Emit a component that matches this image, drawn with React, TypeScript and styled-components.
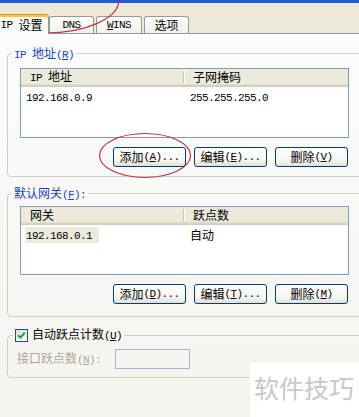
import React from "react";
import styled, { createGlobalStyle } from "styled-components";

const GlobalStyle = createGlobalStyle`
    html, body {
        margin: 0;
        padding: 0;
        background: #ECE9D8;
    }
    body {
        font-family: "Noto Sans CJK SC", "Noto Sans", sans-serif;
        font-size: 12px;
        line-height: 14px;
        color: #000;
    }
`;

const Root = styled.div`
    position: relative;
    width: 359px;
    height: 417px;
    overflow: hidden;
    background: #ECE9D8;
    display: flex;
    flex-direction: column;
`;

const TitleBand = styled.div`
    flex: none;
    height: 3px;
    background: #1D5CD9;
`;

const TabStrip = styled.div`
    flex: none;
    height: 30px;
    display: flex;
    align-items: flex-end;
    gap: 2px;
`;

const Tab = styled.div<{ $w: number; $active?: boolean }>`
    position: relative;
    z-index: ${p => (p.$active ? 1 : 0)};
    box-sizing: border-box;
    width: ${p => p.$w}px;
    height: ${p => (p.$active ? 20 : 17)}px;
    margin-bottom: ${p => (p.$active ? -1 : 0)}px;
    margin-left: ${p => (p.$active ? -6 : 0)}px;
    margin-right: ${p => (p.$active ? -2 : 0)}px;
    border: 1px solid #919B9C;
    border-bottom: none;
    border-top-color: ${p => (p.$active ? "#E68B2C" : "#919B9C")};
    border-radius: 3px 3px 0 0;
    background: ${p => (p.$active ? "#FCFCFE" : "linear-gradient(#FFFFFF, #F1F0EA)")};
    box-shadow: ${p => (p.$active ? "inset 0 2px 0 #FFC83C" : "none")};
    display: flex;
    align-items: center;
    justify-content: center;
    padding-top: ${p => (p.$active ? 1 : 0)}px;
`;

const Page = styled.div`
    flex: 1;
    border-top: 1px solid #919B9C;
    background: linear-gradient(#FCFCFE, #F4F3EE);
    padding: 12px 0 0 7px;
    display: flex;
    flex-direction: column;
`;

const Group = styled.fieldset<{ $pt: number; $pb: number; $pl: number; $mt?: number }>`
    margin: ${p => p.$mt || 0}px -40px 0 0;
    min-width: 0;
    border: 1px solid #D0D0BF;
    border-radius: 4px;
    padding: ${p => p.$pt}px 0 ${p => p.$pb}px ${p => p.$pl}px;
`;

const Legend = styled.legend<{ $ml: number; $plain?: boolean }>`
    margin-left: ${p => p.$ml}px;
    padding: 0 2px;
    height: 14px;
    line-height: 14px;
    color: ${p => (p.$plain ? "#000" : "#1B45B4")};
`;

const LegendInner = styled.span`
    display: inline-flex;
    align-items: center;
    gap: 4px;
    height: 14px;
`;

const ListBox = styled.div<{ $h: number }>`
    box-sizing: border-box;
    width: 329px;
    height: ${p => p.$h}px;
    border: 1px solid #7F9DB9;
    background: #fff;
`;

const HeaderRow = styled.div`
    display: grid;
    grid-template-columns: 163px 1fr;
    height: 18px;
    background: linear-gradient(#EBEADB 0, #EBEADB 15px, #E2DECD 15px, #D6D2C2 17px, #CBC7B8 18px);
`;

const HeadCell = styled.div<{ $sep?: boolean }>`
    display: flex;
    align-items: center;
    padding-left: 9px;
    height: 16px;

    &::after {
        content: "";
        display: ${p => (p.$sep ? "block" : "none")};
        margin-left: auto;
        width: 1px;
        height: 12px;
        background: #C7C5B2;
        box-shadow: 1px 0 0 #fff;
    }
`;

const Row = styled.div`
    display: grid;
    grid-template-columns: 163px 1fr;
    height: 14px;
    margin-top: 2px;
    align-items: center;
`;

const Cell = styled.div<{ $pl: number }>`
    padding-left: ${p => p.$pl}px;
    white-space: nowrap;
`;

const Selected = styled.span`
    display: inline-block;
    padding: 0 7px 0 1px;
    margin-left: -1px;
    background: #EDEBDD;
`;

const ButtonRow = styled.div`
    width: 328px;
    margin-top: 9px;
    display: flex;
    justify-content: flex-end;
    gap: 8px;
`;

const Button = styled.button`
    box-sizing: border-box;
    width: 73px;
    height: 20px;
    padding: 0;
    border: 1px solid #003C74;
    border-radius: 3px;
    background: linear-gradient(#FFFFFF, #F5F4EF 70%, #E2DFD5);
    font: inherit;
    color: #000;
    display: flex;
    align-items: center;
    justify-content: center;
`;

const CheckBox = styled.span`
    box-sizing: border-box;
    width: 13px;
    height: 13px;
    border: 1px solid #1C5180;
    background: linear-gradient(135deg, #DCDCD7, #FFFFFF);
    display: flex;
    align-items: center;
    justify-content: center;
`;

const FieldRow = styled.div`
    display: flex;
    align-items: center;
    height: 20px;
`;

const FieldLabel = styled.span`
    width: 98px;
    color: #ACA899;
    white-space: nowrap;
`;

const FieldInput = styled.div`
    box-sizing: border-box;
    width: 75px;
    height: 20px;
    border: 1px solid #A5B5CA;
`;

const Lat = styled.span`
    font-family: "Liberation Mono", "DejaVu Sans Mono", monospace;
    font-size: 11px;
    letter-spacing: -0.6px;
    white-space: pre;
`;

const Watermark = styled.div`
    position: absolute;
    right: 0;
    bottom: 0;
    width: 109px;
    height: 54px;
    background: #fff;
    box-sizing: border-box;
    padding: 7px 0 0 4px;
    font-size: 25px;
    line-height: 34px;
    color: #C8C8C8;
    white-space: nowrap;
`;

const Mark = styled.svg`
    position: absolute;
    pointer-events: none;
    overflow: visible;
`;

// "&X" underlines X, ascii runs get the narrow half-width font
const Txt = ({ s }: { s: string }) => {
    const parts = s.split(/([\x20-\x7e]+)/).filter(Boolean);
    return (
        <>
            {parts.map((p, i) => {
                if (!/^[\x20-\x7e]+$/.test(p)) return <span key={i}>{p}</span>;
                const bits = p.split(/&(.)/);
                return (
                    <Lat key={i}>
                        {bits.map((b, j) => (j % 2 === 1 ? <u key={j}>{b}</u> : b))}
                    </Lat>
                );
            })}
        </>
    );
};

const tabs = [
    { label: "IP 设置", w: 55, active: true },
    { label: "DNS", w: 45 },
    { label: "&WINS", w: 46 },
    { label: "选项", w: 45 },
];

const App = () => {
    return (
        <Root>
            <GlobalStyle />
            <TitleBand />
            <TabStrip>
                {tabs.map(t => (
                    <Tab key={t.label} $w={t.w} $active={t.active}>
                        <Txt s={t.label} />
                    </Tab>
                ))}
            </TabStrip>
            <Page>
                <Group $pt={8} $pb={9} $pl={12}>
                    <Legend $ml={-8}>
                        <LegendInner><span><Txt s="IP 地址(&R)" /></span></LegendInner>
                    </Legend>
                    <ListBox $h={70}>
                        <HeaderRow>
                            <HeadCell $sep><span><Txt s="IP 地址" /></span></HeadCell>
                            <HeadCell>子网掩码</HeadCell>
                        </HeaderRow>
                        <Row>
                            <Cell $pl={5}><Txt s="192.168.0.9" /></Cell>
                            <Cell $pl={6}><Txt s="255.255.255.0" /></Cell>
                        </Row>
                    </ListBox>
                    <ButtonRow>
                        <Button><Txt s="添加(&A)..." /></Button>
                        <Button><Txt s="编辑(&E)..." /></Button>
                        <Button><Txt s="删除(&V)" /></Button>
                    </ButtonRow>
                </Group>

                <Group $pt={6} $pb={12} $pl={12} $mt={9}>
                    <Legend $ml={-8}>
                        <LegendInner><span><Txt s="默认网关(&F):" /></span></LegendInner>
                    </Legend>
                    <ListBox $h={69}>
                        <HeaderRow>
                            <HeadCell $sep>网关</HeadCell>
                            <HeadCell>跃点数</HeadCell>
                        </HeaderRow>
                        <Row>
                            <Cell $pl={5}><Selected><Txt s="192.168.0.1" /></Selected></Cell>
                            <Cell $pl={6}>自动</Cell>
                        </Row>
                    </ListBox>
                    <ButtonRow>
                        <Button><Txt s="添加(&D)..." /></Button>
                        <Button><Txt s="编辑(&T)..." /></Button>
                        <Button><Txt s="删除(&M)" /></Button>
                    </ButtonRow>
                </Group>

                <Group $pt={7} $pb={8} $pl={9} $mt={11}>
                    <Legend $ml={-4} $plain>
                        <LegendInner>
                            <CheckBox>
                                <svg width="11" height="11" viewBox="0 0 11 11">
                                    <path d="M2.2 5.2 L4.4 7.6 L8.8 2.8" fill="none" stroke="#21A121" strokeWidth="2" />
                                </svg>
                            </CheckBox>
                            <span><Txt s="自动跃点计数(&U)" /></span>
                        </LegendInner>
                    </Legend>
                    <FieldRow>
                        <FieldLabel><Txt s="接口跃点数(&N):" /></FieldLabel>
                        <FieldInput />
                    </FieldRow>
                </Group>
            </Page>

            <Watermark>软件技巧</Watermark>

            <Mark width="130" height="40" style={{ left: 0, top: 0 }}>
                <ellipse cx="45" cy="0" rx="74" ry="33" fill="none" stroke="#B5384B" strokeWidth="1.2" />
            </Mark>
            <Mark width="94" height="47" style={{ left: 98, top: 132 }}>
                <ellipse cx="47" cy="23.5" rx="45.5" ry="22" fill="none" stroke="#B5384B" strokeWidth="1.2" />
            </Mark>
        </Root>
    );
};

export default App;
